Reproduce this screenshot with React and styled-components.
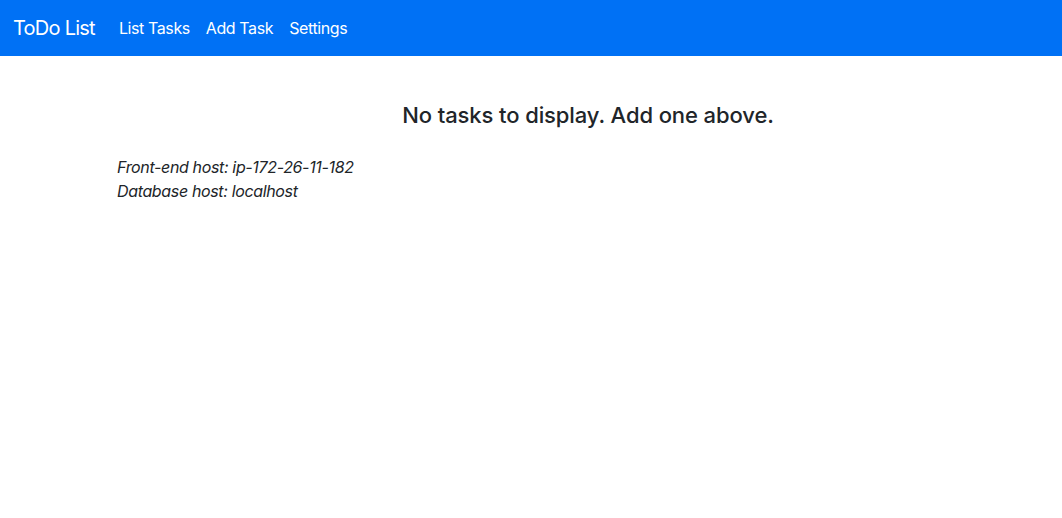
import React from "react";
import styled, { createGlobalStyle } from "styled-components";

const GlobalStyle = createGlobalStyle`
  html, body {
    margin: 0;
    padding: 0;
    background: #fff;
  }
  body {
    font-family: Inter, "Noto Sans", "Liberation Sans", sans-serif;
    font-size: 16px;
    line-height: 1.5;
    color: #212529;
  }
  * { box-sizing: border-box; }
`;

const NavBar = styled.nav`
  display: flex;
  align-items: center;
  height: 56px;
  padding: 0 12px 0 13px;
  background: #0071f5;
`;

const Brand = styled.a`
  color: #fff;
  font-size: 20px;
  line-height: 30px;
  margin-right: 16px;
  text-decoration: none;
  letter-spacing: -0.75px;
`;

const NavList = styled.ul`
  display: flex;
  list-style: none;
  margin: 0;
  padding: 0;
`;

const NavLink = styled.a`
  display: block;
  padding: 8px;
  color: #fff;
  font-size: 16px;
  text-decoration: none;
  letter-spacing: -0.4px;
`;

const Main = styled.main`
  padding: 45px 3px 0 117px;
`;

const Heading = styled.h3`
  margin: 0 0 26px;
  text-align: center;
  font-size: 22px;
  font-weight: 500;
  line-height: 28px;
  letter-spacing: -0.1px;
`;

const HostInfo = styled.p`
  margin: 0;
  font-style: italic;
  font-size: 16px;
  line-height: 24px;
  letter-spacing: -0.35px;
`;

export default function App() {
  return (
    <>
      <GlobalStyle />
      <NavBar>
        <Brand href="#">ToDo List</Brand>
        <NavList>
          <li><NavLink href="#">List Tasks</NavLink></li>
          <li><NavLink href="#">Add Task</NavLink></li>
          <li><NavLink href="#">Settings</NavLink></li>
        </NavList>
      </NavBar>
      <Main>
        <Heading>No tasks to display. Add one above.</Heading>
        <HostInfo>
          Front-end host: ip-172-26-11-182
          <br />
          Database host: localhost
        </HostInfo>
      </Main>
    </>
  );
}
